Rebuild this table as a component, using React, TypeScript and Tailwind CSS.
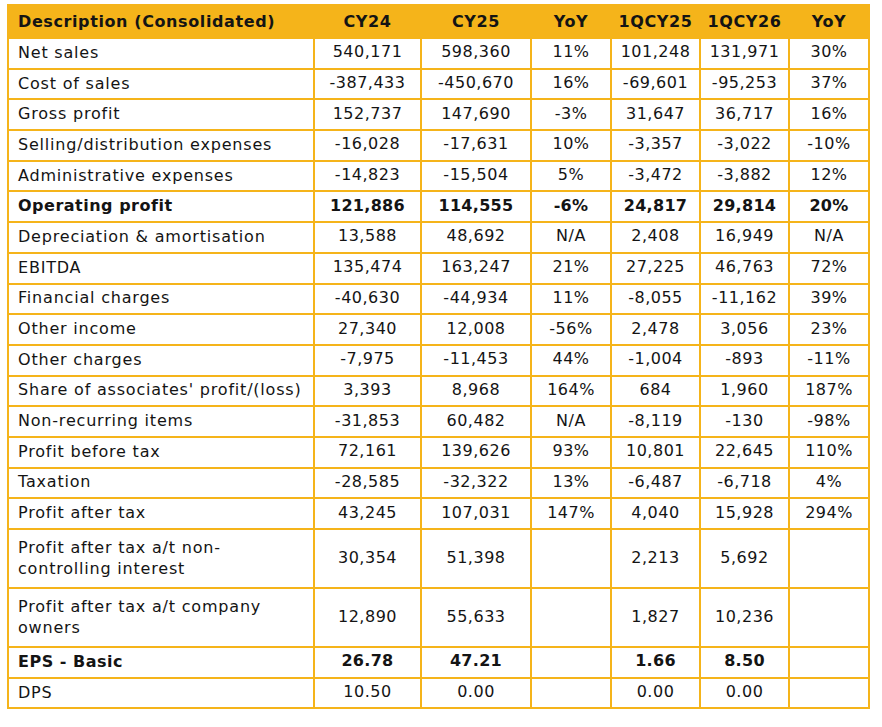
type Row = {
  label: string;
  cy24: string;
  cy25: string;
  yoy: string;
  q25: string;
  q26: string;
  qyoy: string;
  bold?: boolean;
  tall?: boolean;
};

const rows: Row[] = [
  { label: "Net sales", cy24: "540,171", cy25: "598,360", yoy: "11%", q25: "101,248", q26: "131,971", qyoy: "30%" },
  { label: "Cost of sales", cy24: "-387,433", cy25: "-450,670", yoy: "16%", q25: "-69,601", q26: "-95,253", qyoy: "37%" },
  { label: "Gross profit", cy24: "152,737", cy25: "147,690", yoy: "-3%", q25: "31,647", q26: "36,717", qyoy: "16%" },
  { label: "Selling/distribution expenses", cy24: "-16,028", cy25: "-17,631", yoy: "10%", q25: "-3,357", q26: "-3,022", qyoy: "-10%" },
  { label: "Administrative expenses", cy24: "-14,823", cy25: "-15,504", yoy: "5%", q25: "-3,472", q26: "-3,882", qyoy: "12%" },
  { label: "Operating profit", cy24: "121,886", cy25: "114,555", yoy: "-6%", q25: "24,817", q26: "29,814", qyoy: "20%", bold: true },
  { label: "Depreciation & amortisation", cy24: "13,588", cy25: "48,692", yoy: "N/A", q25: "2,408", q26: "16,949", qyoy: "N/A" },
  { label: "EBITDA", cy24: "135,474", cy25: "163,247", yoy: "21%", q25: "27,225", q26: "46,763", qyoy: "72%" },
  { label: "Financial charges", cy24: "-40,630", cy25: "-44,934", yoy: "11%", q25: "-8,055", q26: "-11,162", qyoy: "39%" },
  { label: "Other income", cy24: "27,340", cy25: "12,008", yoy: "-56%", q25: "2,478", q26: "3,056", qyoy: "23%" },
  { label: "Other charges", cy24: "-7,975", cy25: "-11,453", yoy: "44%", q25: "-1,004", q26: "-893", qyoy: "-11%" },
  { label: "Share of associates' profit/(loss)", cy24: "3,393", cy25: "8,968", yoy: "164%", q25: "684", q26: "1,960", qyoy: "187%" },
  { label: "Non-recurring items", cy24: "-31,853", cy25: "60,482", yoy: "N/A", q25: "-8,119", q26: "-130", qyoy: "-98%" },
  { label: "Profit before tax", cy24: "72,161", cy25: "139,626", yoy: "93%", q25: "10,801", q26: "22,645", qyoy: "110%" },
  { label: "Taxation", cy24: "-28,585", cy25: "-32,322", yoy: "13%", q25: "-6,487", q26: "-6,718", qyoy: "4%" },
  { label: "Profit after tax", cy24: "43,245", cy25: "107,031", yoy: "147%", q25: "4,040", q26: "15,928", qyoy: "294%" },
  { label: "Profit after tax a/t non-controlling interest", cy24: "30,354", cy25: "51,398", yoy: "", q25: "2,213", q26: "5,692", qyoy: "", tall: true },
  { label: "Profit after tax a/t company owners", cy24: "12,890", cy25: "55,633", yoy: "", q25: "1,827", q26: "10,236", qyoy: "", tall: true },
  { label: "EPS - Basic", cy24: "26.78", cy25: "47.21", yoy: "", q25: "1.66", q26: "8.50", qyoy: "", bold: true },
  { label: "DPS", cy24: "10.50", cy25: "0.00", yoy: "", q25: "0.00", q26: "0.00", qyoy: "" },
];

const cell = "border-2 border-[#f5b41a] text-center";

export default function App() {
  return (
    <div className="bg-white w-[882px] h-[727px] pt-[4px] pl-[7px] font-['DejaVu_Sans',sans-serif] text-[#141414]">
      <table className="border-collapse w-[863px] table-fixed text-[16px]">
        <colgroup>
          <col className="w-[306px]" />
          <col className="w-[107px]" />
          <col className="w-[110px]" />
          <col className="w-[80px]" />
          <col className="w-[89px]" />
          <col className="w-[89px]" />
          <col className="w-[80px]" />
        </colgroup>
        <thead>
          <tr className="bg-[#f5b41a] font-bold tracking-[0.6px] h-[33px]">
            <th className={`${cell} text-left pl-[9px]`}>Description (Consolidated)</th>
            <th className={cell}>CY24</th>
            <th className={cell}>CY25</th>
            <th className={cell}>YoY</th>
            <th className={cell}>1QCY25</th>
            <th className={cell}>1QCY26</th>
            <th className={cell}>YoY</th>
          </tr>
        </thead>
        <tbody>
          {rows.map((r) => (
            <tr
              key={r.label}
              className={`${r.bold ? "font-bold tracking-[0.3px]" : "tracking-[0.5px]"} ${r.tall ? "h-[59px]" : "h-[30.7px]"}`}
            >
              <td
                className={`${cell} text-left pl-[9px] pr-1 pb-[2px] leading-[21px] ${r.bold ? "tracking-[0.5px]" : "tracking-[0.8px]"}`}
              >
                {r.label}
              </td>
              <td className={`${cell} pb-[2px]`}>{r.cy24}</td>
              <td className={`${cell} pb-[2px]`}>{r.cy25}</td>
              <td className={`${cell} pb-[2px]`}>{r.yoy}</td>
              <td className={`${cell} pb-[2px]`}>{r.q25}</td>
              <td className={`${cell} pb-[2px]`}>{r.q26}</td>
              <td className={`${cell} pb-[2px]`}>{r.qyoy}</td>
            </tr>
          ))}
        </tbody>
      </table>
    </div>
  );
}
